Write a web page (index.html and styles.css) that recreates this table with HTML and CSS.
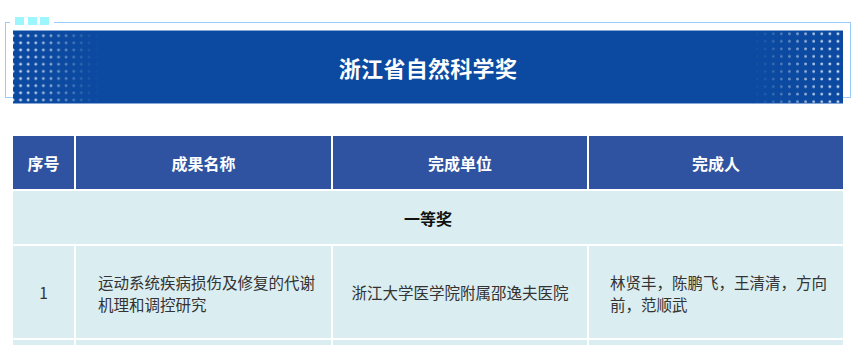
FILE: index.html
```html
<!DOCTYPE html>
<html lang="zh-CN">
<head>
<meta charset="utf-8">
<title>浙江省自然科学奖</title>
<link rel="stylesheet" href="styles.css">
</head>
<body>
  <section class="frame">
    <div class="frame-tabs"><span class="tab"></span><span class="tab"></span><span class="tab"></span></div>
    <div class="banner">
      <h1 class="banner-title">浙江省自然科学奖</h1>
    </div>
  </section>

  <table class="award-table">
    <colgroup>
      <col class="c-no">
      <col class="c-name">
      <col class="c-unit">
      <col class="c-person">
    </colgroup>
    <thead>
      <tr class="head-row">
        <th>序号</th>
        <th>成果名称</th>
        <th>完成单位</th>
        <th class="last">完成人</th>
      </tr>
    </thead>
    <tbody>
      <tr class="level-row">
        <td colspan="4" class="level last">一等奖</td>
      </tr>
      <tr class="item-row">
        <td class="center">1</td>
        <td class="left">运动系统疾病损伤及修复的代谢机理和调控研究</td>
        <td class="center">浙江大学医学院附属邵逸夫医院</td>
        <td class="left last">林贤丰，陈鹏飞，王清清，方向前，范顺武</td>
      </tr>
      <tr class="stub-row">
        <td></td>
        <td></td>
        <td></td>
        <td class="last"></td>
      </tr>
    </tbody>
  </table>
</body>
</html>
```

FILE: styles.css
```css
* { box-sizing: border-box; }

html, body {
  margin: 0;
  padding: 0;
  background: #ffffff;
  font-family: "Noto Sans CJK SC", "Noto Sans", "Liberation Sans", sans-serif;
  color: #333333;
}

body {
  width: 851px;
  height: 345px;
  overflow: hidden;
}

/* ---------- title frame ---------- */
.frame {
  position: relative;
  margin: 22px 0 0 5px;
  width: 846px;
  border: 1px solid #99ccff;
}

.frame-tabs {
  position: absolute;
  left: 4px;
  top: -6px;
  width: 44px;
  height: 8px;
  background: #ffffff;
  display: flex;
  gap: 3.5px;
  padding-left: 5px;
}

.tab {
  width: 9px;
  height: 8px;
  background: #9cf6fd;
}

.banner {
  position: relative;
  margin: 7px 7px -7px 7px;
  height: 74px;
  background: #0b4aa0;
  border-top: 1px solid #86a6d6;
  border-bottom: 1px solid #86a6d6;
  display: flex;
  align-items: center;
  justify-content: center;
  overflow: hidden;
}

.banner::before,
.banner::after {
  content: "";
  position: absolute;
  top: 0;
  bottom: 0;
  width: 88px;
  background-image: radial-gradient(circle, rgba(235, 242, 255, 0.95) 0, rgba(235, 242, 255, 0.85) 1px, rgba(235, 242, 255, 0) 1.8px);
}

.banner::before {
  left: 0;
  background-size: 7.6px 7.15px;
  background-position: -3.8px 1.1px;
  -webkit-mask-image: linear-gradient(to right, #000 0%, rgba(0,0,0,0.8) 30%, rgba(0,0,0,0.1) 85%, transparent 100%);
  mask-image: linear-gradient(to right, #000 0%, rgba(0,0,0,0.8) 30%, rgba(0,0,0,0.1) 85%, transparent 100%);
}

.banner::after {
  right: 0;
  width: 92px;
  background-size: 8.1px 7.55px;
  background-position: right 1px top -1px;
  -webkit-mask-image: linear-gradient(to left, #000 0%, rgba(0,0,0,0.8) 30%, rgba(0,0,0,0.1) 85%, transparent 100%);
  mask-image: linear-gradient(to left, #000 0%, rgba(0,0,0,0.8) 30%, rgba(0,0,0,0.1) 85%, transparent 100%);
}

.banner-title {
  position: relative;
  z-index: 1;
  margin: 0;
  font-size: 22px;
  font-weight: 700;
  color: #ffffff;
  letter-spacing: 0.3px;
  line-height: 1;
}

/* ---------- table ---------- */
.award-table {
  margin: 38px 0 0 13px;
  width: 830px;
  border-collapse: separate;
  border-spacing: 0;
  table-layout: fixed;
}

.c-no { width: 63px; }
.c-name { width: 257px; }
.c-unit { width: 256px; }
.c-person { width: 254px; }

.award-table th,
.award-table td {
  padding: 0;
  border-right: 2px solid #ffffff;
  border-bottom: 2px solid #ffffff;
  vertical-align: middle;
}

.award-table .last { border-right: 0; }

.head-row th {
  height: 55px;
  background: #2f53a0;
  color: #ffffff;
  font-size: 16px;
  font-weight: 700;
  text-align: center;
}

.level-row td {
  height: 55px;
  background: #daedf1;
  color: #111111;
  font-size: 16px;
  font-weight: 700;
  text-align: center;
}

.item-row td {
  height: 94px;
  background: #daedf1;
  font-size: 15.5px;
  line-height: 22px;
  color: #333333;
}

.item-row td.center {
  text-align: center;
}

.item-row td.left {
  text-align: left;
  padding: 2px 14px 0 22px;
}

.item-row td.left.last {
  padding: 2px 10px 0 21px;
}

.stub-row td {
  height: 5px;
  background: #daedf1;
  border-bottom: 0;
}
```
